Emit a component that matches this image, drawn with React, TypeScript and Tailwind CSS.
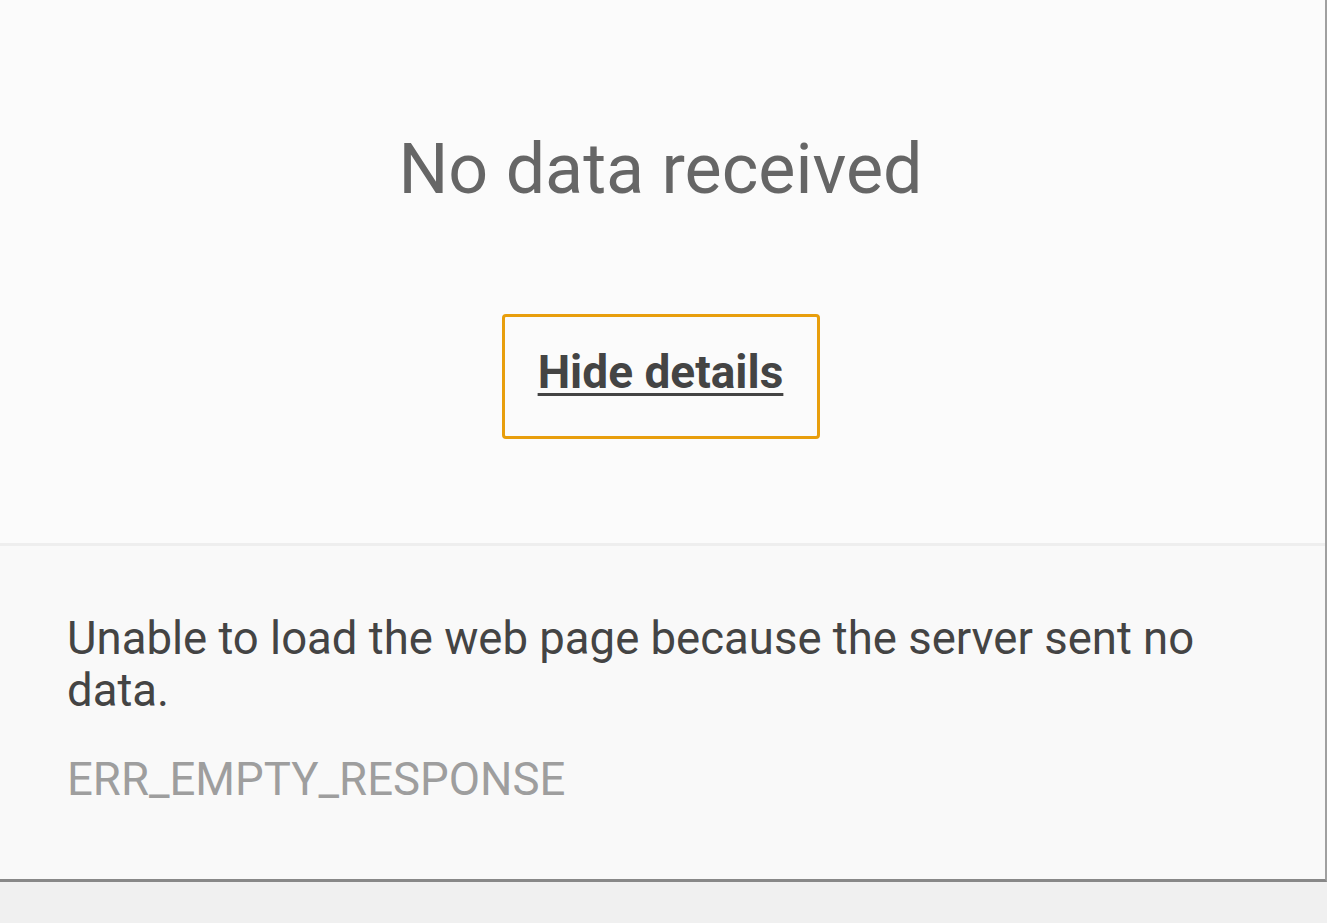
import React from 'react';

export default function App() {
  return (
    <main
      className="min-h-screen w-full bg-[#f0f0f0]"
      style={{ fontFamily: 'Roboto, "Noto Sans", sans-serif' }}
    >
      <div className="w-[1327px] h-[882px] flex flex-col border-r-2 border-b-[3px] border-r-[#a0a0a0] border-b-[#888888] bg-[#f9f9f9]">
        <section className="h-[543px] bg-[#fbfbfb] flex flex-col items-center pr-[4px]">
          <h1 className="mt-[126px] text-[70px] leading-[86px] text-[#666666] font-normal">
            No data received
          </h1>
          <button className="mt-[102px] w-[318px] h-[125px] pb-[10px] rounded-[4px] border-[3px] border-[#e89e0c] flex items-center justify-center">
            <span className="text-[46px] leading-none font-bold text-[#444444] underline underline-offset-[5px] decoration-[3px]">
              Hide details
            </span>
          </button>
        </section>
        <div className="h-[3px] bg-[#eeeeee]" />
        <section className="flex-1 pl-[67px] pr-[60px] pt-[67px]">
          <p className="text-[45.5px] leading-[52px] text-[#444444]">
            Unable to load the web page because the server sent no data.
          </p>
          <p className="mt-[37px] text-[45.5px] leading-[52px] text-[#9e9e9e]">ERR_EMPTY_RESPONSE</p>
        </section>
      </div>
    </main>
  );
}
